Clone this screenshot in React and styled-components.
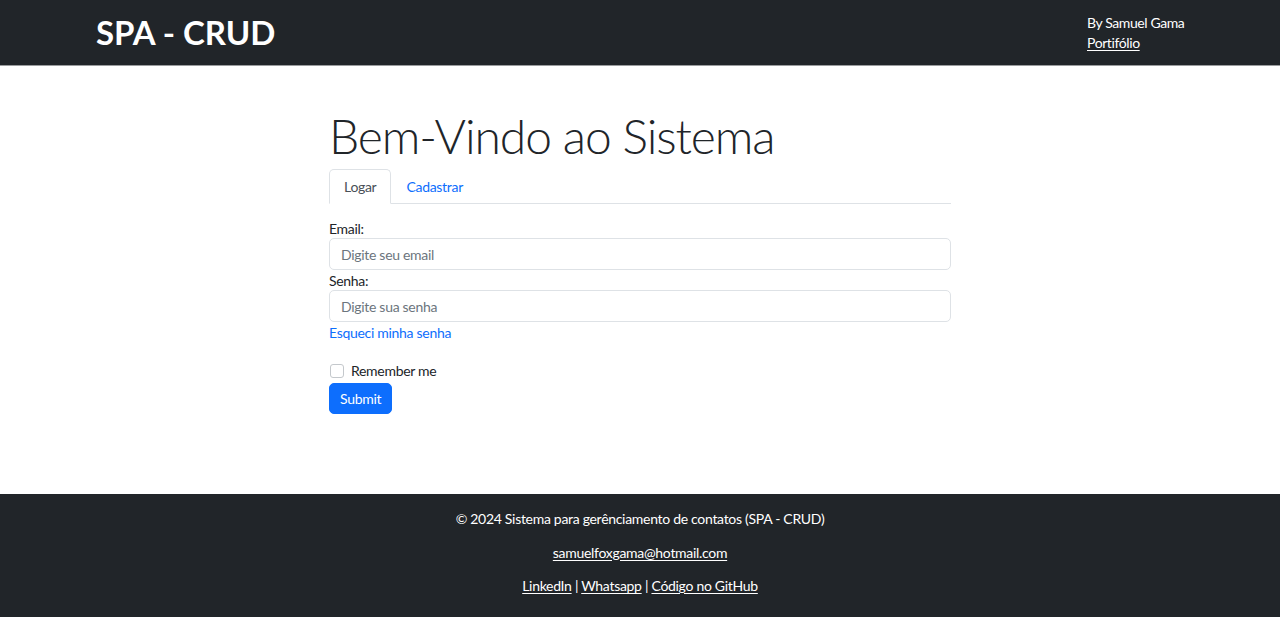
import React from "react";
import styled, { createGlobalStyle } from "styled-components";

const Global = createGlobalStyle`
  html, body { margin: 0; padding: 0; }
  body {
    font-family: Lato, "Open Sans", sans-serif;
    font-size: 14px;
    line-height: 1.5;
    letter-spacing: -0.3px;
    color: #212529;
    background: #fff;
  }
  * { box-sizing: border-box; }
`;

const Page = styled.div`
  display: flex;
  flex-direction: column;
  min-height: 617px;
`;

const Header = styled.header`
  background: #212529;
  height: 66px;
  border-bottom: 1px solid #9a9c9e;
  display: flex;
  align-items: center;
  justify-content: space-between;
  padding: 0 95px 0 96px;
`;

const Brand = styled.h1`
  margin: 0;
  color: #fff;
  font-size: 33px;
  font-weight: 700;
  line-height: 1;
  letter-spacing: 0;
`;

const Byline = styled.div`
  display: flex;
  flex-direction: column;
  color: #fff;
  font-size: 14px;
  line-height: 20px;
  white-space: nowrap;
  letter-spacing: -0.4px;
  width: 98px;
`;

const LightLink = styled.a`
  color: #fff;
  text-decoration: underline;
  text-underline-offset: 2px;
`;

const Main = styled.main`
  flex: 1;
  display: flex;
  justify-content: center;
  padding-top: 40px;
`;

const Content = styled.div`
  width: 622px;
`;

const Title = styled.h2`
  margin: 0 0 3px;
  font-size: 48px;
  font-weight: 300;
  line-height: 60px;
  letter-spacing: -1.1px;
`;

const Tabs = styled.div`
  display: flex;
  border-bottom: 1px solid #dee2e6;
  height: 35px;
`;

const Tab = styled.button`
  font: inherit;
  font-size: 14px;
  letter-spacing: -0.3px;
  background: ${(p) => (p.$active ? "#fff" : "transparent")};
  color: ${(p) => (p.$active ? "#495057" : "#0d6efd")};
  border: 1px solid ${(p) => (p.$active ? "#dee2e6" : "transparent")};
  border-bottom-color: ${(p) => (p.$active ? "#fff" : "transparent")};
  border-radius: 5px 5px 0 0;
  padding: 0 14px;
  height: 35px;
  margin-bottom: -1px;
  cursor: pointer;
`;

const Form = styled.form`
  display: flex;
  flex-direction: column;
  padding-top: 15px;
`;

const Label = styled.label`
  display: block;
  font-size: 14px;
  line-height: 20px;
  margin-bottom: -1px;
`;

const Input = styled.input`
  display: block;
  width: 100%;
  height: 32px;
  padding: 0 11px;
  font: inherit;
  font-size: 14px;
  letter-spacing: -0.3px;
  color: #212529;
  border: 1px solid #dee2e6;
  border-radius: 5px;
  margin-bottom: 1px;
  &::placeholder { color: #6c757d; }
`;

const BlueLink = styled.a`
  color: #0d6efd;
  text-decoration: none;
  font-size: 14px;
  line-height: 20px;
  align-self: flex-start;
`;

const CheckRow = styled.label`
  display: flex;
  align-items: center;
  gap: 7px;
  margin-top: 18px;
  font-size: 14px;
  line-height: 20px;
`;

const Check = styled.input`
  appearance: none;
  width: 14px;
  height: 14px;
  margin: 0 0 0 1px;
  border: 1px solid #c4c8cc;
  border-radius: 3px;
  background: #fff;
`;

const SubmitButton = styled.button`
  align-self: flex-start;
  margin-top: 2px;
  font: inherit;
  font-size: 14px;
  letter-spacing: -0.3px;
  color: #fff;
  background: #0d6efd;
  border: 1px solid #0d6efd;
  border-radius: 5px;
  height: 31px;
  padding: 0 10px;
  cursor: pointer;
`;

const Footer = styled.footer`
  background: #212529;
  color: #fff;
  height: 123px;
  display: flex;
  flex-direction: column;
  align-items: center;
  padding-top: 15px;
  gap: 13px;
  font-size: 14px;
  line-height: 20.5px;
`;

const FooterLine = styled.p`
  margin: 0;
`;

export default function App() {
  return (
    <>
      <Global />
      <Page>
        <Header>
          <Brand>SPA - CRUD</Brand>
          <Byline>
            <span>By Samuel Gama</span>
            <LightLink href="#">Portifólio</LightLink>
          </Byline>
        </Header>
        <Main>
          <Content>
            <Title>Bem-Vindo ao Sistema</Title>
            <Tabs>
              <Tab $active type="button">Logar</Tab>
              <Tab type="button">Cadastrar</Tab>
            </Tabs>
            <Form onSubmit={(e) => e.preventDefault()}>
              <Label htmlFor="email">Email:</Label>
              <Input id="email" type="email" placeholder="Digite seu email" />
              <Label htmlFor="senha">Senha:</Label>
              <Input id="senha" type="password" placeholder="Digite sua senha" />
              <BlueLink href="#">Esqueci minha senha</BlueLink>
              <CheckRow>
                <Check type="checkbox" />
                Remember me
              </CheckRow>
              <SubmitButton type="submit">Submit</SubmitButton>
            </Form>
          </Content>
        </Main>
        <Footer>
          <FooterLine>© 2024 Sistema para gerênciamento de contatos (SPA - CRUD)</FooterLine>
          <FooterLine>
            <LightLink href="#">samuelfoxgama@hotmail.com</LightLink>
          </FooterLine>
          <FooterLine>
            <LightLink href="#">LinkedIn</LightLink> | <LightLink href="#">Whatsapp</LightLink> |{" "}
            <LightLink href="#">Código no GitHub</LightLink>
          </FooterLine>
        </Footer>
      </Page>
    </>
  );
}
